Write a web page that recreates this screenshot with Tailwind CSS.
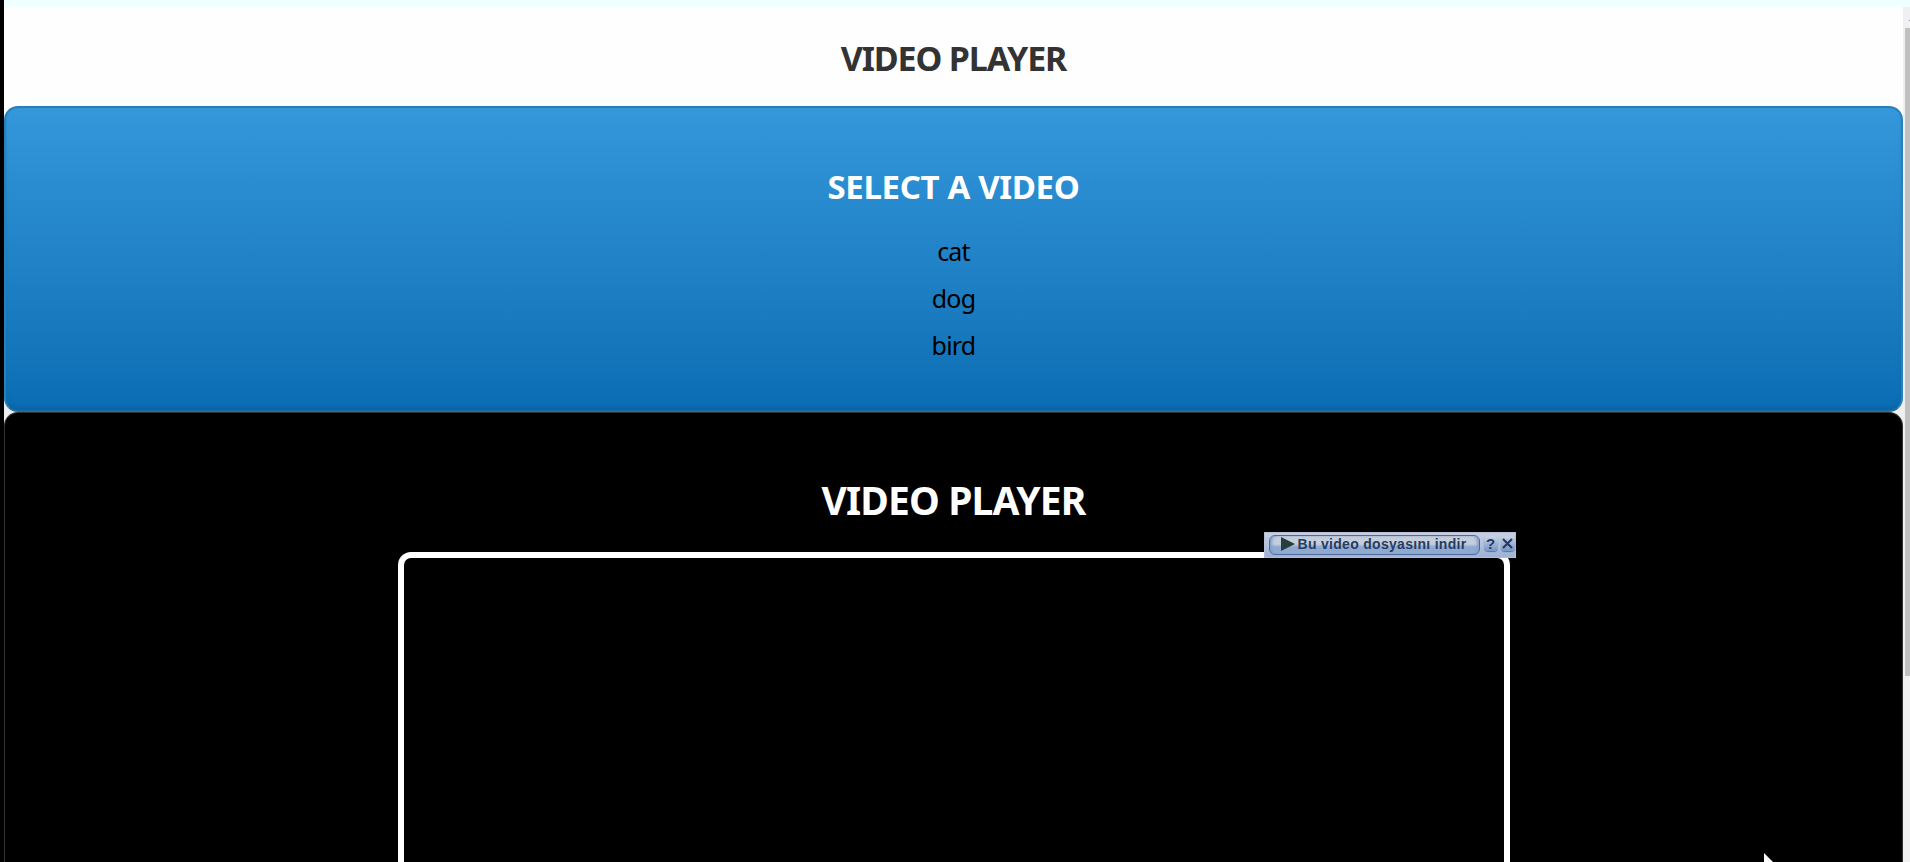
<!DOCTYPE html>
<html lang="tr">
<head>
<meta charset="utf-8">
<title>Video Player</title>
<script src="https://cdn.jsdelivr.net/npm/@tailwindcss/browser@4"></script>
</head>
<body class="relative flex h-[862px] w-[1910px] flex-col overflow-hidden bg-black pl-1 font-['Noto_Sans','Open_Sans',sans-serif]">
<div class="h-[7px] shrink-0 bg-[#f0ffff]"></div>
<div class="flex min-h-0 flex-1">
  <main class="flex w-[1899px] flex-col bg-[#efefef] text-center">
    <header class="h-[111px] shrink-0 bg-[#fefefe] pt-[31px] -mb-3">
      <h1 class="text-[34px] leading-10 font-bold tracking-[-1.15px] text-[#333]">VIDEO PLAYER</h1>
    </header>
    <section class="h-[306px] shrink-0 rounded-[14px] border-2 border-[#2980b9] border-b-[#1e6da3] bg-linear-to-b from-[#3498db] to-[#096db3] bg-origin-border pt-[59px] shadow-[inset_0_-5px_5px_-3px_#0862a0]">
      <h2 class="text-[33px] leading-10 font-bold tracking-[-0.35px] text-white">SELECT A VIDEO</h2>
      <ul class="mt-[21px] text-[25px] leading-[47px] tracking-[-0.8px] text-black">
        <li>cat</li>
        <li>dog</li>
        <li>bird</li>
      </ul>
    </section>
    <section class="flex min-h-0 flex-1 flex-col items-center rounded-t-[14px] border border-b-0 border-[#333] bg-black pt-[62px]">
      <h2 class="text-[39px] leading-[50px] font-bold tracking-[-0.85px] text-white">VIDEO PLAYER</h2>
      <div class="relative mt-[27px] w-[1112px] flex-1 rounded-t-[13px] border-6 border-b-0 border-white">
        <div class="absolute -top-[26px] left-[860px] flex h-[26px] w-[252px] items-center border border-[#b5bfd5] bg-linear-to-b from-[#c9cfdf] to-[#9db2d5] pl-1 font-['Liberation_Sans',sans-serif] text-[#263c60]">
          <button class="flex h-5 w-[211px] items-center rounded-md border border-[#526b9b] bg-linear-to-b from-[#c5cddd] from-45% to-[#8faad2] to-60% pl-[11px] shadow-[inset_3px_0_3px_-1px_#819fc9,inset_-3px_0_3px_-1px_#819fc9]">
            <svg class="relative -top-px h-[14px] w-[14px]" viewBox="0 0 14 14"><path d="M0 0L14 7L0 14Z" fill="#293e3b"/></svg>
            <span class="ml-[3px] -mt-[2px] whitespace-nowrap text-[14px] leading-4 font-bold tracking-[0.3px]">Bu video dosyasını indir</span>
          </button>
          <span class="ml-[4px] -mt-[4px] flex h-[15px] w-[14px] items-center justify-center rounded bg-linear-to-b from-[#c9d3e7] to-[#7897c6] text-[15px] leading-none font-bold shadow-[0_1px_1px_#5874a5]">?</span>
          <span class="ml-[3px] -mt-[4px] flex h-[15px] w-[14px] items-center justify-center rounded bg-linear-to-b from-[#c9d3e7] to-[#7897c6] shadow-[0_1px_1px_#5874a5]"><svg class="h-[11px] w-[11px]" viewBox="0 0 11 11"><path d="M1 1L10 10M10 1L1 10" stroke="#263c60" stroke-width="2.2"/></svg></span>
        </div>
      </div>
    </section>
  </main>
  <aside class="w-[7px] bg-[#f0f0f0] pt-[21px] pl-[2px]"><div class="h-[648px] bg-[#c0c0c0]"></div></aside>
</div>
<svg class="absolute top-[853px] left-[1764px] h-[9px] w-[9px]" viewBox="0 0 9 9"><path d="M0 0L9 9H0Z" fill="#fff"/></svg>
<div class="absolute top-5 left-[1909px] h-px w-px bg-[#8d8da0]"></div>
</body>
</html>
